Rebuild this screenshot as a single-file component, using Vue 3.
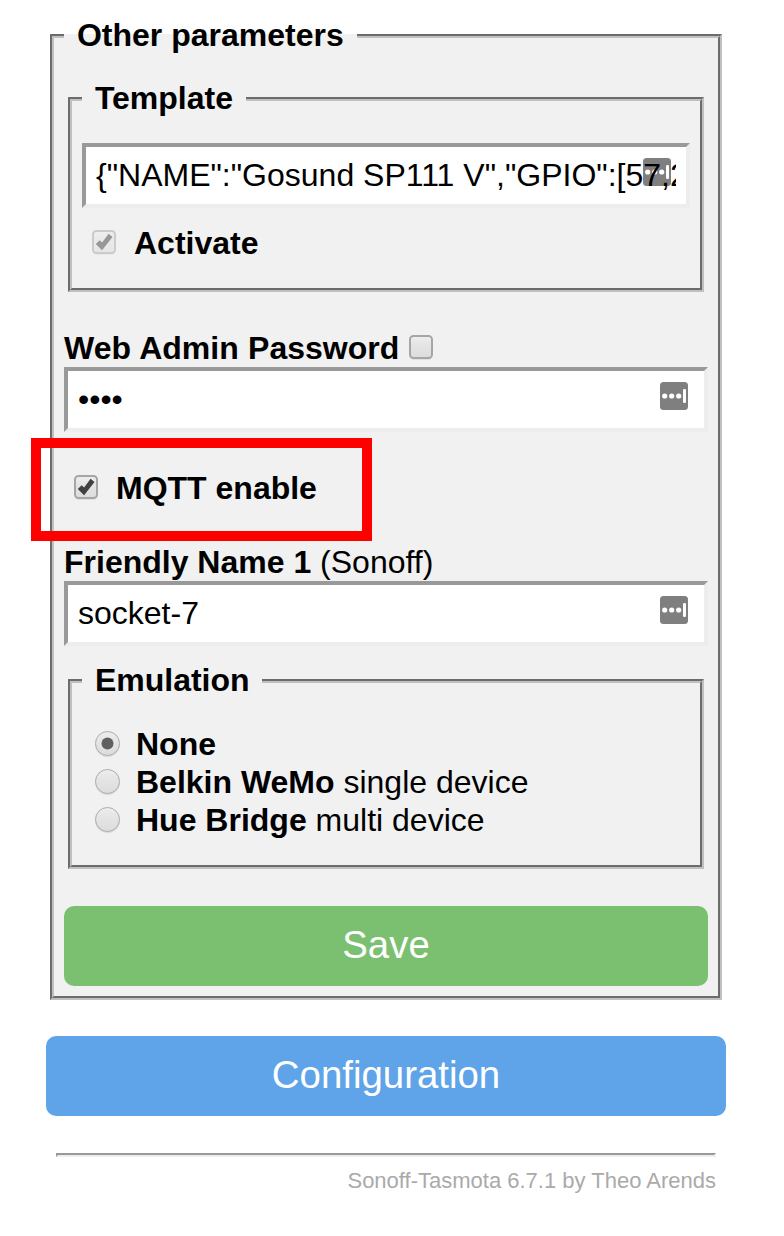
<script setup>
import { ref } from 'vue'

const template = ref('{"NAME":"Gosund SP111 V","GPIO":[57,255,56,255,0,134,0,0,131,17,132,21,0],"FLAG":0,"BASE":45}')
const password = ref('1234')
const friendlyName = ref('socket-7')
const emulation = ref(0)
const modes = [
  { name: 'None', note: '' },
  { name: 'Belkin WeMo', note: ' single device' },
  { name: 'Hue Bridge', note: ' multi device' },
]
</script>

<template>
  <main class="page">
    <fieldset class="group outer">
      <legend><b>&nbsp;Other parameters&nbsp;</b></legend>

      <fieldset class="group template">
        <legend><b>&nbsp;Template&nbsp;</b></legend>
        <div class="field">
          <svg class="key" viewBox="0 0 28 28"><rect width="28" height="28" rx="3.5" fill="#7f7f7f" /><g fill="#fff"><circle cx="4.7" cy="14" r="2.6" /><circle cx="11.7" cy="14" r="2.6" /><circle cx="18.7" cy="14" r="2.6" /><rect x="23" y="7" width="3" height="14" rx="1.2" /></g></svg>
          <input v-model="template" type="text" spellcheck="false" />
        </div>
        <div class="line activate">
          <svg class="check dim" viewBox="0 0 24 26"><rect x="1" y="2" width="22" height="23" rx="4" fill="#000" opacity=".07" /><rect x="1" y="1" width="22" height="22" rx="3.5" fill="url(#face)" stroke="#a6a6a6" stroke-width="2" /><path d="M3.8 14l3.9-3.7 2.4 2.2 6.5-8.7 3.9 3.1-10.4 13.4z" fill="#404040" /></svg>
          <b>Activate</b>
        </div>
      </fieldset>

      <div class="line admin">
        <b>Web Admin Password</b>
        <svg class="check" viewBox="0 0 24 26"><rect x="1" y="2" width="22" height="23" rx="4" fill="#000" opacity=".07" /><rect x="1" y="1" width="22" height="22" rx="3.5" fill="url(#face)" stroke="#a6a6a6" stroke-width="2" /></svg>
      </div>
      <div class="field">
        <svg class="key" viewBox="0 0 28 28"><rect width="28" height="28" rx="3.5" fill="#7f7f7f" /><g fill="#fff"><circle cx="4.7" cy="14" r="2.6" /><circle cx="11.7" cy="14" r="2.6" /><circle cx="18.7" cy="14" r="2.6" /><rect x="23" y="7" width="3" height="14" rx="1.2" /></g></svg>
        <input v-model="password" type="password" />
      </div>

      <div class="line mqtt">
        <svg class="check" viewBox="0 0 24 26"><rect x="1" y="2" width="22" height="23" rx="4" fill="#000" opacity=".07" /><rect x="1" y="1" width="22" height="22" rx="3.5" fill="url(#face)" stroke="#a6a6a6" stroke-width="2" /><path d="M3.8 14l3.9-3.7 2.4 2.2 6.5-8.7 3.9 3.1-10.4 13.4z" fill="#404040" /></svg>
        <b>MQTT enable</b>
        <span class="highlight"></span>
      </div>

      <div class="line friendly"><b>Friendly Name 1</b>&nbsp;(Sonoff)</div>
      <div class="field">
        <svg class="key" viewBox="0 0 28 28"><rect width="28" height="28" rx="3.5" fill="#7f7f7f" /><g fill="#fff"><circle cx="4.7" cy="14" r="2.6" /><circle cx="11.7" cy="14" r="2.6" /><circle cx="18.7" cy="14" r="2.6" /><rect x="23" y="7" width="3" height="14" rx="1.2" /></g></svg>
        <input v-model="friendlyName" type="text" />
      </div>

      <fieldset class="group emulation">
        <legend><b>&nbsp;Emulation&nbsp;</b></legend>
        <div class="modes">
          <div v-for="(mode, i) in modes" :key="mode.name" class="line mode" @click="emulation = i">
            <svg class="radio" viewBox="0 0 25 27"><circle cx="12.5" cy="13.8" r="12.4" fill="#000" opacity=".08" /><circle cx="12.5" cy="12.5" r="12" fill="url(#face)" stroke="#acacac" /><circle v-if="emulation === i" cx="12.5" cy="12.5" r="6" fill="#606060" /></svg>
            <span><b>{{ mode.name }}</b>{{ mode.note }}</span>
          </div>
        </div>
      </fieldset>

      <button class="btn save">Save</button>
    </fieldset>

    <button class="btn config">Configuration</button>
    <hr />
    <footer>Sonoff-Tasmota 6.7.1 by Theo Arends</footer>

    <svg class="defs" width="0" height="0">
      <defs>
        <linearGradient id="face" x1="0" y1="0" x2="0" y2="1">
          <stop offset="0" stop-color="#eee" />
          <stop offset=".38" stop-color="#e5e5e5" />
          <stop offset="1" stop-color="#dcdcdc" />
        </linearGradient>
      </defs>
    </svg>
  </main>
</template>

<style>
body {
  background: #fff;
}
</style>

<style scoped>
.page {
  box-sizing: border-box;
  width: 784px;
  height: 1236px;
  padding: 18px 58px 0 46px;
  overflow: hidden;
  position: relative;
  color: #000;
  font: 32px/36px "Liberation Sans", Arial, sans-serif;
}
.group {
  box-sizing: border-box;
  min-width: 0;
  margin: 0 4px;
  padding: 0 10px;
  border: 4px groove #c0c0c0;
  background: #f1f1f1;
}
.group legend {
  height: 36px;
  padding: 0 4px;
  line-height: 34px;
}
.outer {
  padding-bottom: 10px;
}
.template {
  margin-top: 27px;
  padding-bottom: 27px;
}
.template .field {
  margin-top: 26px;
}
.template .key {
  top: 11px;
  right: 15px;
}
.field {
  position: relative;
  box-sizing: border-box;
  height: 65px;
  border: 4px solid;
  border-color: #999 #ededed #ededed #999;
  background: #fff;
}
.field input {
  position: relative;
  display: block;
  box-sizing: border-box;
  width: 100%;
  height: 57px;
  margin: 0;
  padding: 0;
  border: 10px solid transparent;
  outline: 0;
  background: none;
  color: #000;
  font: inherit;
}
.key {
  position: absolute;
  top: 11px;
  right: 16px;
  width: 28px;
  height: 28px;
}
.line {
  display: flex;
  height: 36px;
  white-space: pre;
}
.check {
  flex: none;
  width: 24px;
  height: 26px;
  margin-top: 5px;
}
.dim {
  opacity: .5;
}
.activate {
  margin-top: 17px;
  padding-left: 10px;
  gap: 18px;
}
.admin {
  height: 37px;
  margin-top: 38px;
  gap: 10px;
  word-spacing: .5px;
}
.mqtt {
  position: relative;
  margin-top: 38px;
  padding-left: 10px;
  gap: 18px;
}
.highlight {
  position: absolute;
  box-sizing: border-box;
  left: -33px;
  top: -32px;
  width: 341px;
  height: 103px;
  border: 10px solid #f00;
}
.friendly {
  height: 37px;
  margin-top: 38px;
}
.emulation {
  margin-top: 17px;
  padding-bottom: 27px;
}
.modes {
  display: grid;
  gap: 2px;
  margin-top: 27px;
}
.mode {
  padding-left: 13px;
  gap: 16px;
}
.radio {
  flex: none;
  width: 25px;
  height: 27px;
  margin-top: 5px;
}
.btn {
  display: block;
  width: 100%;
  height: 80px;
  padding: 0 0 2px;
  border: 0;
  border-radius: 10px;
  color: #fff;
  font: 38.4px/76px "Liberation Sans", Arial, sans-serif;
}
.save {
  margin-top: 37px;
  background: #7bc070;
}
.config {
  margin-top: 36px;
  background: #5fa4e9;
}
hr {
  box-sizing: border-box;
  height: 4px;
  margin: 37px 10px 0;
  border: 2px solid;
  border-color: #999 #eee #eee #999;
}
footer {
  margin: 11px 10px 0;
  color: #aaa;
  font-size: 22px;
  line-height: 26px;
  text-align: right;
}
.defs {
  position: absolute;
}
</style>
